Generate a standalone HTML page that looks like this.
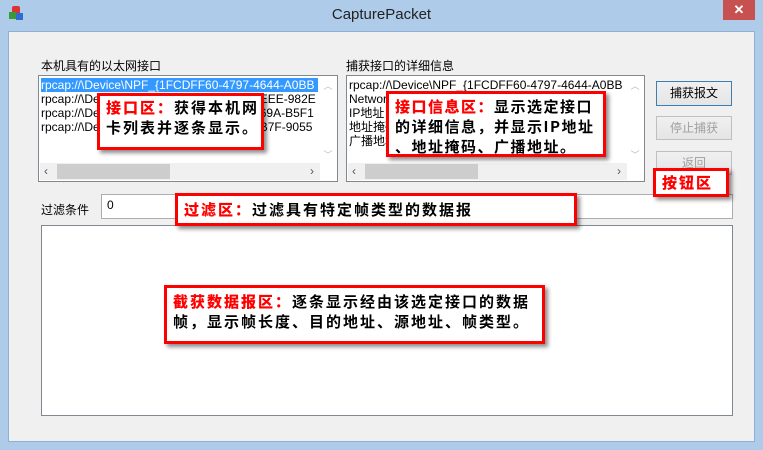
<!DOCTYPE html>
<html><head><meta charset="utf-8"><style>
*{margin:0;padding:0;box-sizing:border-box}
body{width:763px;height:450px;background:#aecbea;position:relative;overflow:hidden;font-family:"Liberation Sans","Microsoft YaHei","Noto Sans CJK SC",sans-serif;font-size:12px;color:#000}
.a{position:absolute}
.client{left:8px;top:31px;width:747px;height:411px;background:#f0f0f0;border:1px solid #8fb0d4}
.box{background:#fff;border:1px solid #828790}
.row{position:absolute;left:2px;height:14px;line-height:14px;white-space:nowrap;font-size:12px;font-family:"Liberation Sans","Noto Sans CJK SC",sans-serif}
.hs{position:absolute;left:1px;right:17px;bottom:1px;height:17px;background:#f0f0f0}
.vs{position:absolute;right:1px;top:1px;width:16px;bottom:18px;background:#fff}
.note{position:absolute;background:#fff;border:3px solid #f00;box-shadow:3px 3px 4px rgba(0,0,0,.45);font-weight:bold;font-size:15px;line-height:20px;letter-spacing:2px;font-family:"Noto Sans CJK SC","WenQuanYi Zen Hei",sans-serif;padding:2px 0 0 6px;color:#000;white-space:nowrap;overflow:hidden}
.note b{color:#f00}
.btn{position:absolute;border:1px solid #acacac;background:linear-gradient(#f0f0f0,#e5e5e5);text-align:center;line-height:22px;font-size:12px}
.lbl{position:absolute;font-size:12px;white-space:nowrap}
</style></head><body>
<div class="a" style="left:9px;top:6px;width:14px;height:14px">
<div class="a" style="left:3px;top:0;width:8px;height:8px;background:#d33;border-radius:2px"></div>
<div class="a" style="left:0;top:6px;width:7px;height:7px;background:#3a9a3a"></div>
<div class="a" style="left:7px;top:7px;width:7px;height:7px;background:#2a6fd0"></div>
</div>
<div class="a" style="left:0;width:763px;top:6px;text-align:center;font-size:15px;color:#222">CapturePacket</div>
<div class="a" style="left:723px;top:0;width:32px;height:20px;background:#c75050;color:#fff;text-align:center;font-size:13px;line-height:20px;font-weight:bold">✕</div>
<div class="a client"></div>

<div class="lbl" style="left:41px;top:57px">本机具有的以太网接口</div>
<div class="a box" style="left:38px;top:75px;width:300px;height:107px;overflow:hidden">
 <div class="a" style="left:2px;top:2px;width:277px;height:14px;background:#3399ff"></div>
 <div class="row" style="top:2px;color:#fff">rpcap://\Device\NPF_{1FCDFF60-4797-4644-A0BB</div>
 <div class="row" style="top:16px">rpcap://\Device\NPF_{1FCDFF60-4797-4EEE-982E</div>
 <div class="row" style="top:30px">rpcap://\Device\NPF_{1FCDFF60-4797-469A-B5F1</div>
 <div class="row" style="top:44px">rpcap://\Device\NPF_{1FCDFF60-4797-4B7F-9055</div>
 <div class="vs"><div style="color:#bbb;font-size:9px;text-align:center;margin-top:2px">︿</div><div style="position:absolute;bottom:2px;width:16px;text-align:center;color:#bbb;font-size:9px">﹀</div></div>
 <div class="hs"><span style="position:absolute;left:4px;top:1px;color:#555">‹</span><div style="position:absolute;left:17px;top:1px;width:113px;height:15px;background:#cdcdcd"></div><span style="position:absolute;right:6px;top:1px;color:#555">›</span></div>
</div>

<div class="lbl" style="left:346px;top:57px">捕获接口的详细信息</div>
<div class="a box" style="left:346px;top:75px;width:299px;height:107px;overflow:hidden">
 <div class="row" style="top:2px">rpcap://\Device\NPF_{1FCDFF60-4797-4644-A0BB</div>
 <div class="row" style="top:16px">Network</div>
 <div class="row" style="top:30px">IP地址</div>
 <div class="row" style="top:44px">地址掩码</div>
 <div class="row" style="top:58px">广播地址</div>
 <div class="vs"><div style="color:#bbb;font-size:9px;text-align:center;margin-top:2px">︿</div><div style="position:absolute;bottom:2px;width:16px;text-align:center;color:#bbb;font-size:9px">﹀</div></div>
 <div class="hs"><span style="position:absolute;left:4px;top:1px;color:#555">‹</span><div style="position:absolute;left:17px;top:1px;width:113px;height:15px;background:#cdcdcd"></div><span style="position:absolute;right:6px;top:1px;color:#555">›</span></div>
</div>

<div class="btn" style="left:656px;top:81px;width:76px;height:25px;border-color:#3c7fb1;">捕获报文</div>
<div class="btn" style="left:656px;top:116px;width:76px;height:24px;color:#a0a0a0;border-color:#bfbfbf">停止捕获</div>
<div class="btn" style="left:656px;top:151px;width:76px;height:24px;color:#a0a0a0;border-color:#bfbfbf">返回</div>

<div class="lbl" style="left:41px;top:201px">过滤条件</div>
<div class="a" style="left:101px;top:194px;width:632px;height:25px;background:#fff;border:1px solid #abadb3"><span style="position:absolute;left:5px;top:3px;font-size:12px">0</span></div>

<div class="a box" style="left:41px;top:225px;width:692px;height:191px"></div>

<div class="note" style="left:97px;top:93px;width:167px;height:57px"><b>接口区：</b>获得本机网<br>卡列表并逐条显示。</div>
<div class="note" style="left:386px;top:91px;width:220px;height:66px;padding-top:3px;letter-spacing:1.5px"><b>接口信息区：</b>显示选定接口<br>的详细信息，并显示IP地址<br>、地址掩码、广播地址。</div>
<div class="note" style="left:653px;top:168px;width:76px;height:29px;padding-top:2px"><b>按钮区</b></div>
<div class="note" style="left:175px;top:193px;width:402px;height:33px;padding-top:4px"><b>过滤区：</b>过滤具有特定帧类型的数据报</div>
<div class="note" style="left:164px;top:285px;width:381px;height:59px;padding-top:4px"><b>截获数据报区：</b>逐条显示经由该选定接口的数据<br>帧，显示帧长度、目的地址、源地址、帧类型。</div>
</body></html>
